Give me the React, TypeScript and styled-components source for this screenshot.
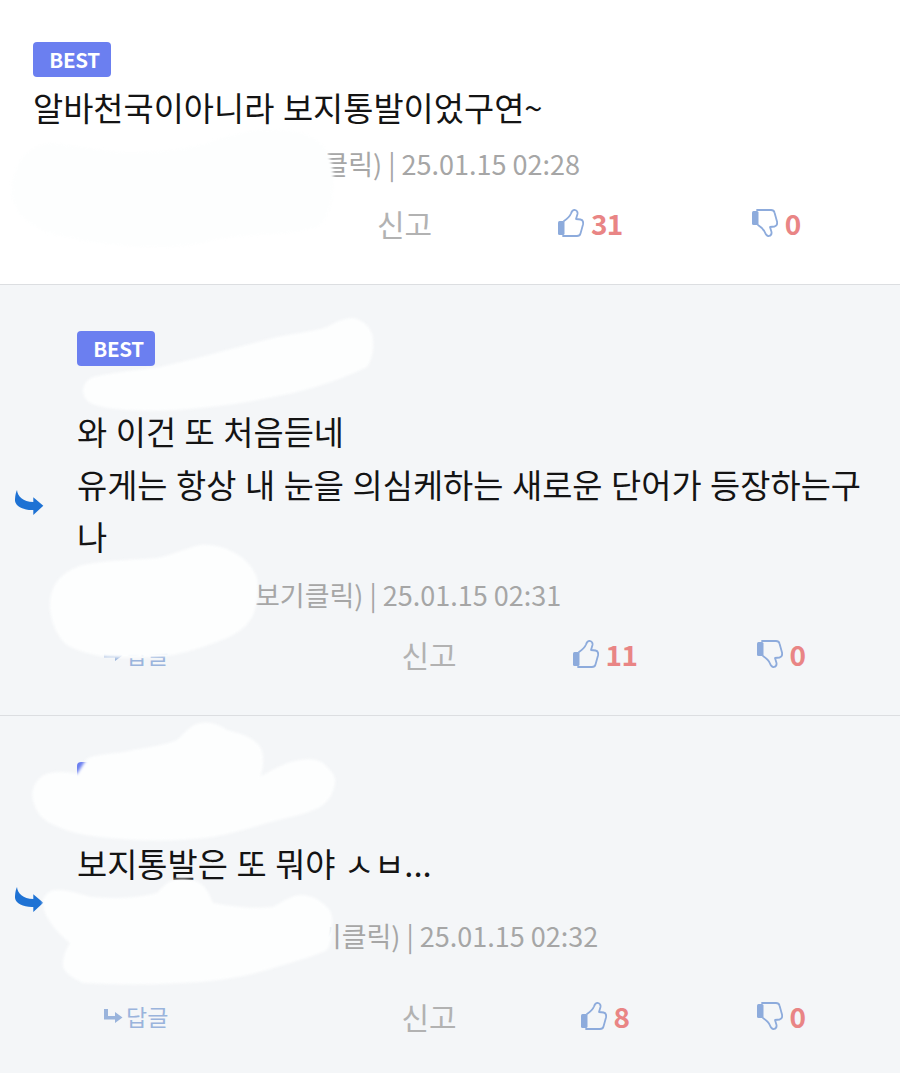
import React from "react";
import styled, { createGlobalStyle } from "styled-components";

const Global = createGlobalStyle`
  html, body { margin: 0; padding: 0; background: #fff; }
  body { font-family: "Noto Sans CJK KR", "Noto Sans", sans-serif; }
  * { box-sizing: border-box; }
`;

const Page = styled.div`
  position: relative;
  width: 900px;
  height: 1073px;
  overflow: hidden;
  background: #f4f6f8;
`;

const Comment = styled.section<{ $reply?: boolean; $h: number; $top: number }>`
  position: relative;
  height: ${(p) => p.$h}px;
  padding: ${(p) => p.$top}px 31px 0 ${(p) => (p.$reply ? 77 : 33)}px;
  background: ${(p) => (p.$reply ? "#f4f6f8" : "#ffffff")};
  border-bottom: 1px solid #dcdee1;
  &:last-of-type { border-bottom: 0; }
`;

const Badge = styled.div`
  display: flex;
  align-items: center;
  justify-content: center;
  width: 78px;
  height: 35px;
  padding-left: 5px;
  border-radius: 4px;
  background: #6b7ff0;
  color: #fff;
  font-size: 20.5px;
  font-weight: 700;
  line-height: 1;
  letter-spacing: -0.3px;
`;

const Body = styled.div<{ $gap: number }>`
  margin-top: ${(p) => p.$gap}px;
  font-size: 32.8px;
  line-height: 52.5px;
  word-spacing: 1.2px;
  color: #141414;
  word-break: break-all;
`;

const Meta = styled.div<{ $gap: number }>`
  display: flex;
  align-items: center;
  margin-top: ${(p) => p.$gap}px;
  height: 38px;
  font-size: 27px;
  line-height: 38px;
  color: #a6a6a6;
  white-space: nowrap;
`;

const NameSpace = styled.span<{ $w: number }>`
  display: inline-block;
  flex: none;
  width: ${(p) => p.$w}px;
`;

const Actions = styled.div<{ $gap: number }>`
  display: grid;
  grid-template-columns: 3fr 2fr 2fr 2fr;
  align-items: center;
  margin-top: ${(p) => p.$gap}px;
  height: 44px;
`;

const ReplyLink = styled.div`
  display: flex;
  align-items: center;
  gap: 3px;
  padding-left: 26px;
  font-size: 23px;
  color: #9ab4dc;
`;

const Report = styled.div`
  grid-column: 2;
  text-align: center;
  font-size: 30px;
  color: #b2b2b2;
`;

const Vote = styled.div`
  display: flex;
  align-items: center;
  justify-content: center;
  gap: 7px;
  font-size: 28px;
  font-weight: 700;
  letter-spacing: -0.6px;
  color: #e98585;
`;

const ThumbIcon = styled.svg<{ $down?: boolean }>`
  flex: none;
  transform: ${(p) => (p.$down ? "scaleY(-1)" : "none")};
`;

const ReplyMark = styled.svg<{ $top: number }>`
  position: absolute;
  left: 15px;
  top: ${(p) => p.$top}px;
`;

const Scribbles = styled.svg`
  position: absolute;
  inset: 0;
  pointer-events: none;
`;

const Blob = styled.path`
  fill: #fdfefe;
  filter: blur(1.5px);
`;

const Thumb = ({ down }: { down?: boolean }) => (
  <ThumbIcon $down={down} width="26" height="28" viewBox="0 0 26 28" fill="none">
    <path
      d="M6 12 C9 10 12 7 13 4.5 C14 1.5 15.5 0.8 17 1 C19 1.5 19.8 3 19.5 5 L18 10 L22.5 10.5 C24.8 11 25.5 13 25 15.5 L22.5 24.5 C22 26.5 20.5 27 19 27 L5 27"
      stroke="#8dabdc"
      strokeWidth="1.8"
      strokeLinecap="round"
      strokeLinejoin="round"
    />
    <rect x="0" y="12" width="6.5" height="14" rx="1.5" fill="#8dabdc" />
  </ThumbIcon>
);

const BigArrow = ({ top }: { top: number }) => (
  <ReplyMark $top={top} width="29" height="25" viewBox="0 0 29 25">
    <path d="M2 0 C2.5 6 8 12 18.3 12 L18.3 7.3 L28.3 15.7 L18.3 25 L18.3 20 C8 20.5 -1 16 0 9 C0.3 5 1 2 2 0 Z" fill="#1e72d4" />
  </ReplyMark>
);

const SmallArrow = () => (
  <svg width="20" height="14" viewBox="0 0 20 14">
    <path d="M1 0 L5 0 L5 7 L12 7 L12 3 L19.5 8.5 L12 14 L12 10.5 L1 10.5 Z" fill="#9ab4dc" />
  </svg>
);

const Row = ({ reply, up, down }: { reply?: boolean; up: number; down: number }) => (
  <>
    {reply ? (
      <ReplyLink>
        <SmallArrow />
        답글
      </ReplyLink>
    ) : null}
    <Report>신고</Report>
    <Vote>
      <Thumb />
      {up}
    </Vote>
    <Vote>
      <Thumb down />
      {down}
    </Vote>
  </>
);

export default function App() {
  return (
    <Page>
      <Global />
      <Comment $h={285} $top={42}>
        <Badge>BEST</Badge>
        <Body $gap={4}>알바천국이아니라 보지통발이었구연~</Body>
        <Meta $gap={11}>
          <NameSpace $w={157} />
          (프로필보기클릭) | 25.01.15 02:28
        </Meta>
        <Actions $gap={18}>
          <Row up={31} down={0} />
        </Actions>
      </Comment>
      <Comment $reply $h={431} $top={46}>
        <BigArrow top={205} />
        <Badge>BEST</Badge>
        <Body $gap={39}>
          와 이건 또 처음듣네
          <br />
          유게는 항상 내 눈을 의심케하는 새로운 단어가 등장하는구나
        </Body>
        <Meta $gap={13}>
          <NameSpace $w={178} />
          보기클릭) | 25.01.15 02:31
        </Meta>
        <Actions $gap={18}>
          <Row reply up={11} down={0} />
        </Actions>
      </Comment>
      <Comment $reply $h={357} $top={46}>
        <BigArrow top={171} />
        <Badge>BEST</Badge>
        <Body $gap={40}>보지통발은 또 뭐야 ㅅㅂ...</Body>
        <Meta $gap={27}>
          <NameSpace $w={215} />
          보기클릭) | 25.01.15 02:32
        </Meta>
        <Actions $gap={39}>
          <Row reply up={8} down={0} />
        </Actions>
      </Comment>
      <Scribbles width="900" height="1073" viewBox="0 0 900 1073">
        <Blob d="M12 187 C14 160 30 146 50 143 C85 146 105 152 127 152 C160 152 185 150 207 143 C225 138 240 132 257 130 C285 128 308 132 320 143 C332 155 335 172 333 187 C332 205 328 220 317 227 C295 235 262 233 233 237 C210 240 190 247 167 247 C125 248 85 242 50 233 C35 228 24 220 17 210 C13 203 12 195 12 187 Z" />
        <Blob d="M83 390 C84 383 88 379 93 377 C115 372 138 370 160 367 C182 362 205 356 227 350 C245 345 262 341 277 337 C295 333 312 332 327 327 C335 322 345 318 353 318 C365 320 373 330 373 340 C374 350 372 360 367 367 C345 378 318 387 293 393 C265 399 238 404 210 407 C182 410 155 412 127 410 C112 409 100 407 90 403 C85 399 83 395 83 390 Z" />
        <Blob d="M50 608 C49 597 53 585 60 578 C67 571 75 567 83 565 C108 560 132 560 157 558 C172 555 187 548 200 545 C212 544 224 547 233 552 C245 558 253 567 257 578 C259 590 258 604 253 615 C248 626 238 633 227 638 C210 645 192 651 173 655 C152 658 128 658 107 657 C92 655 78 651 67 645 C57 637 51 622 50 608 Z" />
        <Blob d="M33 800 C30 788 38 775 50 773 C60 771 70 772 77 774 C80 769 83 764 86 760 C90 754 118 754 133 750 C150 747 165 745 177 740 C185 733 190 725 200 723 C210 721 220 725 227 730 C238 733 247 735 253 740 C260 745 263 750 263 757 C264 765 262 772 260 777 C272 770 285 762 300 760 C312 758 322 760 327 767 C333 772 336 778 335 783 C333 795 328 802 320 807 C305 815 285 818 267 823 C250 828 232 834 213 837 C175 842 135 841 100 837 C80 835 62 830 50 823 C40 818 35 809 33 800 Z" />
        <Blob d="M43 900 C46 893 50 890 58 890 C70 890 82 895 93 897 C115 899 138 898 157 893 C163 887 167 882 173 880 C182 878 192 879 200 883 C207 888 210 896 213 903 C235 907 255 909 273 907 C282 902 290 896 300 895 C312 895 320 900 327 907 C332 912 333 918 332 925 C332 935 331 944 327 950 C310 958 285 964 267 970 C245 977 222 980 200 982 C160 985 120 985 83 983 C73 978 65 973 63 967 C62 958 66 950 70 943 C60 935 52 926 47 917 C44 911 42 905 43 900 Z" />
      </Scribbles>
    </Page>
  );
}
